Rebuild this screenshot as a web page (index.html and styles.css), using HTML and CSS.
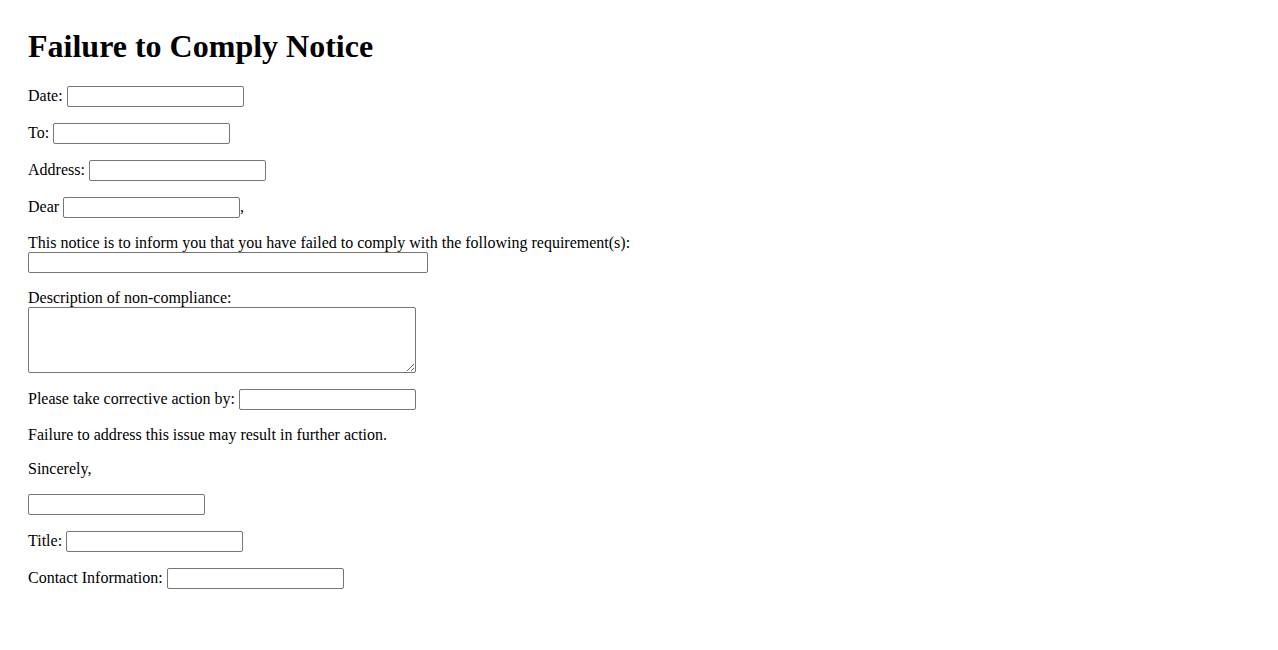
FILE: index.html
```html
<!DOCTYPE html>
<html lang="en">
<head>
<meta charset="utf-8">
<title>Failure to Comply Notice</title>
<link rel="stylesheet" href="styles.css">
</head>
<body>
<div class="page">
  <h1 class="title">Failure to Comply Notice</h1>
  <p class="row">Date: <input class="field" type="text"></p>
  <p class="row">To: <input class="field" type="text"></p>
  <p class="row">Address: <input class="field" type="text"></p>
  <p class="row">Dear <input class="field" type="text">,</p>
  <p class="row">This notice is to inform you that you have failed to comply with the following requirement(s):<br><input class="field field-wide" type="text"></p>
  <p class="row">Description of non-compliance:<br><textarea class="area"></textarea></p>
  <p class="row">Please take corrective action by: <input class="field" type="text"></p>
  <p class="row">Failure to address this issue may result in further action.</p>
  <p class="row">Sincerely,</p>
  <p class="row"><input class="field" type="text"></p>
  <p class="row">Title: <input class="field" type="text"></p>
  <p class="row">Contact Information: <input class="field" type="text"></p>
</div>
</body>
</html>
```
FILE: styles.css
```css
html, body {
  background: #ffffff;
}
body {
  margin: 8px;
  font-family: "Liberation Serif", "Times New Roman", serif;
  font-size: 16px;
  color: #000000;
}
.page {
  padding: 20px;
}
.title {
  font-size: 32px;
  font-weight: bold;
  margin: 0 0 21.44px 0;
}
.row {
  margin: 16px 0;
}
.field {
  width: 177px;
  height: 21px;
  box-sizing: border-box;
  border: 1px solid #767676;
  border-radius: 2px;
  padding: 1px 2px;
  font-family: "Liberation Sans", Arial, sans-serif;
  font-size: 13.333px;
  background: #ffffff;
}
.field-wide {
  width: 400px;
}
.area {
  width: 388px;
  height: 66px;
  box-sizing: border-box;
  border: 1px solid #767676;
  border-radius: 2px;
  padding: 2px;
  font-family: "Liberation Mono", monospace;
  font-size: 13.333px;
  vertical-align: bottom;
  margin: 0;
}
```
